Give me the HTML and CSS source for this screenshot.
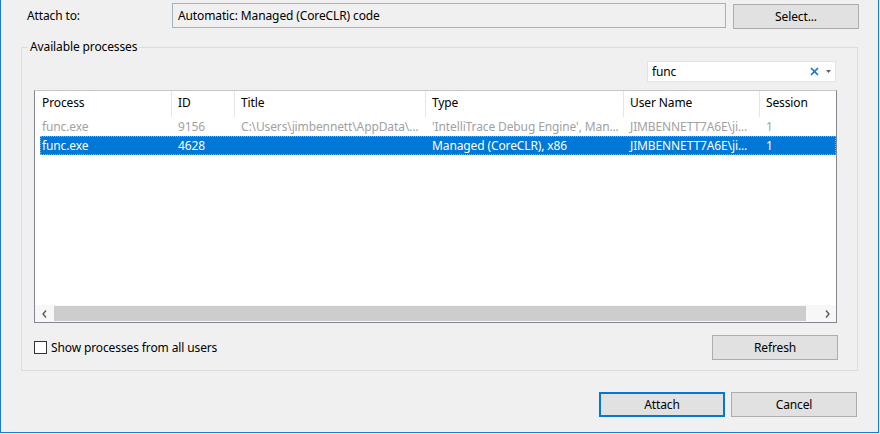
FILE: index.html
```html
<!DOCTYPE html>
<html>
<head>
<meta charset="utf-8">
<title>Attach to Process</title>
<link rel="stylesheet" href="styles.css">
</head>
<body>
<div class="window">
  <div class="top-row">
    <span class="attach-label">Attach to:</span>
    <div class="target-box">Automatic: Managed (CoreCLR) code</div>
    <button class="btn select-btn">Select...</button>
  </div>

  <fieldset class="group">
    <legend class="group-title">Available processes</legend>
    <div class="search-row">
      <div class="search">
        <span class="search-text">func</span>
        <svg class="clear-icon" width="9" height="9" viewBox="0 0 9 9"><path d="M1 1 L8 8 M8 1 L1 8" stroke="#1c6fc9" stroke-width="1.7" fill="none"/></svg>
        <svg class="drop-icon" width="5" height="3" viewBox="0 0 5 3"><path d="M0 0 H5 L2.5 3 Z" fill="#606060"/></svg>
      </div>
    </div>

    <div class="list">
      <div class="list-body">
        <div class="header">
          <div class="hcell c1">Process</div>
          <div class="hcell">ID</div>
          <div class="hcell">Title</div>
          <div class="hcell">Type</div>
          <div class="hcell">User Name</div>
          <div class="hcell last">Session</div>
        </div>
        <div class="row dim">
          <div class="cell c1">func.exe</div>
          <div class="cell">9156</div>
          <div class="cell">C:\Users\jimbennett\AppData\...</div>
          <div class="cell">'IntelliTrace Debug Engine', Man...</div>
          <div class="cell">JIMBENNETT7A6E\ji...</div>
          <div class="cell">1</div>
        </div>
        <div class="row selected">
          <div class="cell c1">func.exe</div>
          <div class="cell">4628</div>
          <div class="cell"></div>
          <div class="cell">Managed (CoreCLR), x86</div>
          <div class="cell">JIMBENNETT7A6E\ji...</div>
          <div class="cell">1</div>
        </div>
      </div>
      <div class="hscroll">
        <div class="sb-btn"><svg width="5" height="8" viewBox="0 0 5 8"><path d="M4 0.5 L1 4 L4 7.5" stroke="#5a5a5a" stroke-width="1.4" fill="none"/></svg></div>
        <div class="sb-track"><div class="sb-thumb"></div></div>
        <div class="sb-btn"><svg width="5" height="8" viewBox="0 0 5 8"><path d="M1 0.5 L4 4 L1 7.5" stroke="#5a5a5a" stroke-width="1.4" fill="none"/></svg></div>
      </div>
    </div>

    <div class="group-footer">
      <label class="check"><span class="check-box"></span>Show processes from all users</label>
      <button class="btn refresh-btn">Refresh</button>
    </div>
  </fieldset>

  <div class="dialog-buttons">
    <button class="btn default-btn">Attach</button>
    <button class="btn">Cancel</button>
  </div>
</div>
</body>
</html>
```

FILE: styles.css
```css
html, body {
  margin: 0;
  padding: 0;
}

body {
  background: #f0f0f0;
  font-family: "Noto Sans", "Open Sans", sans-serif;
  font-size: 12px;
  letter-spacing: -0.12px;
  color: #000;
}

.window {
  width: 879px;
  height: 433px;
  box-sizing: border-box;
  border: 1px solid #1a7ad4;
  border-top: none;
  background: #f0f0f0;
  overflow: hidden;
}

.top-row {
  display: flex;
  align-items: flex-start;
  margin-top: 3px;
  padding-left: 26px;
}

.attach-label {
  width: 145px;
  line-height: 25px;
}

.target-box {
  width: 554px;
  height: 25px;
  box-sizing: border-box;
  border: 1px solid #a3b1c2;
  padding-left: 5px;
  line-height: 23px;
  background: #f0f0f0;
}

.btn {
  font-family: inherit;
  font-size: 12px;
  letter-spacing: inherit;
  color: #000;
  width: 126px;
  height: 25px;
  box-sizing: border-box;
  border: 1px solid #adadad;
  background: #e1e1e1;
  padding: 0;
  margin: 0;
}

.select-btn {
  margin-left: 7px;
  margin-top: 1px;
}

.group {
  margin: 10px 0 0 20px;
  width: 837px;
  box-sizing: border-box;
  border: 1px solid #dcdcdc;
  padding: 0;
  min-width: 0;
}

.group-title {
  margin-left: 6px;
  padding: 0 2px;
  line-height: 16px;
}

.search-row {
  display: flex;
  justify-content: flex-end;
  margin-top: 6px;
  padding-right: 21px;
}

.search {
  width: 189px;
  height: 21px;
  box-sizing: border-box;
  border: 1px solid #e3e3e3;
  background: #fff;
  display: flex;
  align-items: center;
  padding-left: 4px;
}

.search-text {
  flex: 1;
}

.clear-icon {
  margin-right: 7px;
}

.drop-icon {
  margin-right: 4px;
}

.list {
  margin: 8px 0 0 12px;
  width: 803px;
  height: 233px;
  box-sizing: border-box;
  border: 1px solid #828790;
  border-top-color: #c8c8c8;
  background: #fff;
  display: flex;
  flex-direction: column;
}

.list-body {
  flex: 1;
}

.header,
.row {
  display: grid;
  grid-template-columns: 137px 63px 191px 198px 136px 1fr;
}

.header {
  height: 26px;
}

.hcell {
  border-right: 1px solid #e5e5e5;
  padding-left: 6px;
  line-height: 24px;
  white-space: nowrap;
  overflow: hidden;
}

.hcell.c1 {
  padding-left: 7px;
}

.hcell.last {
  border-right: none;
}

.row {
  height: 19px;
  margin-left: 5px;
  grid-template-columns: 132px 63px 191px 198px 136px 1fr;
}

.cell {
  padding-left: 6px;
  line-height: 19px;
  white-space: nowrap;
  overflow: hidden;
}

.cell.c1 {
  padding-left: 2px;
}

.row.dim {
  color: #a2a2a2;
}

.row.selected {
  background: #0078d7;
  color: #fff;
  outline: 1px dotted rgba(255, 255, 255, 0.45);
  outline-offset: -1px;
}

.hscroll {
  height: 17px;
  display: flex;
  background: #f7f7f7;
}

.sb-btn {
  width: 18px;
  display: flex;
  align-items: center;
  justify-content: center;
}

.sb-track {
  flex: 1;
  padding: 1px 12px 1px 1px;
}

.sb-thumb {
  height: 100%;
  background: #cdcdcd;
}

.group-footer {
  display: flex;
  align-items: center;
  justify-content: space-between;
  margin: 12px 19px 10px 12px;
}

.check {
  display: flex;
  align-items: center;
}

.check-box {
  width: 13px;
  height: 13px;
  box-sizing: border-box;
  border: 1px solid #333;
  background: #fff;
  margin-right: 4px;
}

.dialog-buttons {
  display: flex;
  justify-content: flex-end;
  gap: 6px;
  margin: 21px 21px 0 0;
}

.default-btn {
  border: 2px solid #0078d7;
}
```
